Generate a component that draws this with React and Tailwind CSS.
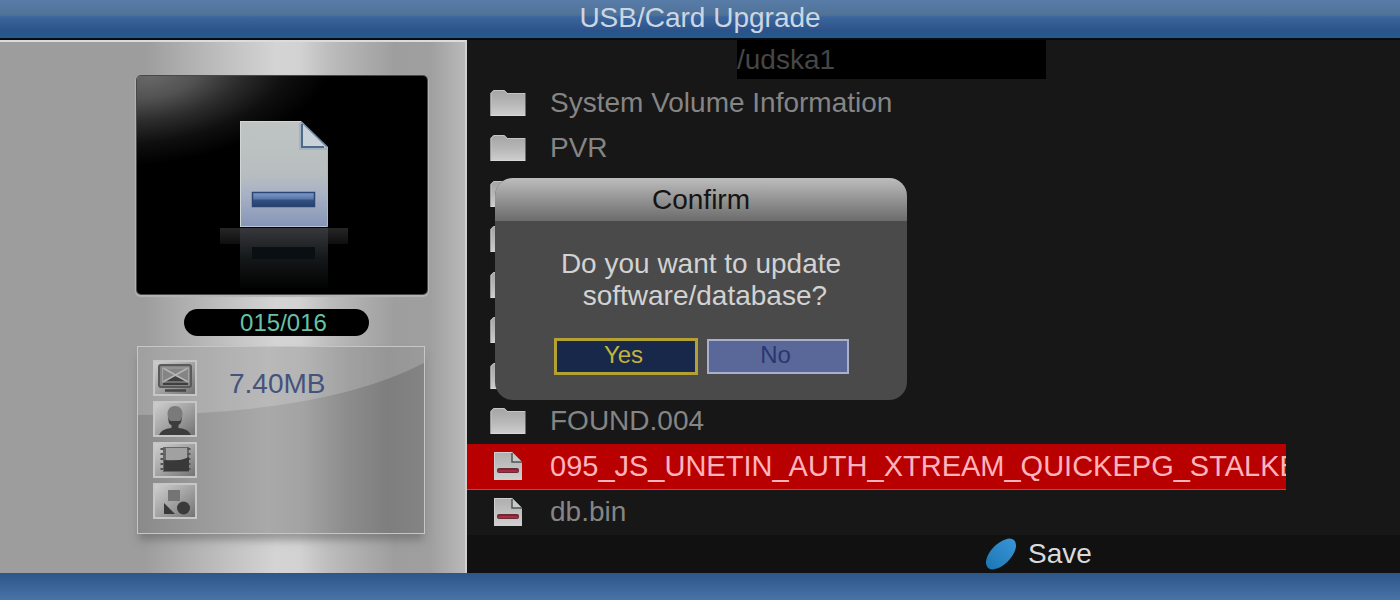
import React from "react";

const entries = [
  { kind: "folder", name: "System Volume Information" },
  { kind: "folder", name: "PVR" },
  { kind: "folder", name: "" },
  { kind: "folder", name: "" },
  { kind: "folder", name: "" },
  { kind: "folder", name: "" },
  { kind: "folder", name: "" },
  { kind: "folder", name: "FOUND.004" },
  { kind: "file", name: "095_JS_UNETIN_AUTH_XTREAM_QUICKEPG_STALKE", selected: true },
  { kind: "file", name: "db.bin" },
];

function FolderIcon() {
  return (
    <svg width="36" height="28" viewBox="0 0 36 28" aria-hidden="true" className="shrink-0">
      <defs>
        <linearGradient id="folder" x1="0" y1="0" x2="0" y2="1">
          <stop offset="0" stopColor="#a4a4a4" />
          <stop offset="0.5" stopColor="#b6b6b6" />
          <stop offset="1" stopColor="#cfcfcf" />
        </linearGradient>
      </defs>
      <path d="M0.500 27V4L3.500 1H14.500L17.500 4H35.500V27Z" fill="url(#folder)" />
      <path d="M1 27V4.500L4 1.500H14L17 4.500H35" fill="none" stroke="#c4c4c4" strokeWidth="1" />
      <path d="M1 26.500H35" stroke="#d8d8d8" />
    </svg>
  );
}

function FileIcon() {
  return (
    <svg width="36" height="28" viewBox="0 0 36 28" aria-hidden="true" className="shrink-0">
      <defs>
        <linearGradient id="file" x1="0" y1="0" x2="0" y2="1">
          <stop offset="0" stopColor="#aeaeae" />
          <stop offset="1" stopColor="#d0d0d0" />
        </linearGradient>
      </defs>
      <path d="M4 0H22L32 10V28H4Z" fill="url(#file)" />
      <path d="M4.500 28V0.500H22" fill="none" stroke="#cfcfcf" />
      <path d="M22 0V10H32Z" fill="#c6cac9" />
      <path d="M22 1V10H32" fill="none" stroke="#4f5555" strokeWidth="1.500" />
      <rect x="7" y="16" width="22" height="5" rx="2" fill="#6b2a38" />
      <rect x="8" y="18" width="20" height="2" rx="1" fill="#a82c40" />
    </svg>
  );
}

function PreviewArt() {
  return (
    <svg viewBox="0 0 290 218" className="block w-full" aria-hidden="true">
      <defs>
        <radialGradient id="shine" gradientUnits="userSpaceOnUse" cx="0" cy="0" r="1" gradientTransform="translate(14 0) rotate(-8) scale(185 88)">
          <stop offset="0" stopColor="#686868" />
          <stop offset="0.25" stopColor="#525252" />
          <stop offset="0.5" stopColor="#2c2c2c" />
          <stop offset="0.75" stopColor="#0f0f0f" />
          <stop offset="1" stopColor="#000" />
        </radialGradient>
        <linearGradient id="page" x1="0" y1="0" x2="0" y2="1">
          <stop offset="0" stopColor="#bfc4c3" />
          <stop offset="0.5" stopColor="#b8bebf" />
          <stop offset="0.68" stopColor="#a9b2c6" />
          <stop offset="1" stopColor="#8595b6" />
        </linearGradient>
        <linearGradient id="bar" x1="0" y1="0" x2="0" y2="1">
          <stop offset="0" stopColor="#7f9ccb" />
          <stop offset="0.45" stopColor="#5877ab" />
          <stop offset="0.55" stopColor="#35517f" />
          <stop offset="1" stopColor="#243f6b" />
        </linearGradient>
        <linearGradient id="mirror" x1="0" y1="0" x2="0" y2="1">
          <stop offset="0" stopColor="#36383c" />
          <stop offset="0.5" stopColor="#151819" />
          <stop offset="1" stopColor="#020202" />
        </linearGradient>
        <linearGradient id="shelf" x1="0" y1="0" x2="0" y2="1">
          <stop offset="0" stopColor="#262626" />
          <stop offset="1" stopColor="#0e0e0e" />
        </linearGradient>
      </defs>
      <rect width="290" height="218" fill="url(#shine)" />
      <rect x="83" y="152" width="128" height="16" fill="url(#shelf)" />
      <rect x="103" y="152" width="88" height="60" fill="url(#mirror)" />
      <rect x="115" y="171" width="63" height="12" fill="#0a0f14" />
      <path d="M103 45H164L191 71V151H103Z" fill="url(#page)" />
      <path d="M103.500 151V45.500H164" fill="none" stroke="#d0d5d6" />
      <path d="M104 150.500H190" stroke="#b9c4da" />
      <path d="M190.500 72V150" stroke="#a5b6da" />
      <path d="M162 47V74H190V72H165V46Z" fill="#8fa3bd" opacity="0.5" />
      <path d="M165 46V71H190Z" fill="#c9d2d8" />
      <path d="M165 48V71H187" fill="none" stroke="#4d6a88" strokeWidth="2" />
      <path d="M164.500 46L190 71" stroke="#7088a4" strokeWidth="1.500" />
      <rect x="115.500" y="116.500" width="62" height="14" fill="url(#bar)" stroke="#2b4674" strokeWidth="1.500" />
    </svg>
  );
}

function Tile({ children, id }) {
  return (
    <svg width="44" height="36" viewBox="0 0 44 36" aria-hidden="true" className="block">
      <defs>
        <linearGradient id={id} x1="0" y1="0" x2="1" y2="1">
          <stop offset="0" stopColor="#d0d0d0" />
          <stop offset="0.5" stopColor="#a3a3a3" />
          <stop offset="1" stopColor="#707070" />
        </linearGradient>
      </defs>
      <rect x="1" y="1" width="42" height="34" fill={"url(#" + id + ")"} stroke="#c6c6c6" strokeWidth="2" />
      {children}
    </svg>
  );
}

function InfoTiles() {
  return (
    <div className="flex flex-col gap-[5px]">
      <Tile id="tile-mail">
        <rect x="6" y="5" width="32" height="22" rx="2" fill="#858585" stroke="#5a5a5a" strokeWidth="2" />
        <path d="M10 22L22 16L35 22V25H10Z" fill="#3f3f3f" />
        <path d="M10 8L35 22M35 8L10 22" stroke="#b5b5b5" strokeWidth="1.500" />
        <rect x="9.500" y="8" width="26" height="14" fill="none" stroke="#a2a2a2" />
        <path d="M12 30.500H33" stroke="#454545" strokeWidth="2.500" />
      </Tile>
      <Tile id="tile-user">
        <path d="M15 14Q15 24 18.500 24V27Q8 28 6 34H38Q36 28 25.500 27V24Q29 23 29 14Z" fill="#3c3c3c" />
        <path d="M14.500 13Q15 5 22 5Q29 5 29.500 13Q29 20 26 20H18Q15 20 14.500 13Z" fill="#7a7a7a" />
      </Tile>
      <Tile id="tile-film">
        <rect x="10" y="5" width="26" height="25" fill="#666" />
        <path d="M9 6V31M36 6V31" stroke="#555" strokeWidth="3" strokeDasharray="2 3" />
        <rect x="13" y="6" width="21" height="12" fill="#a1a1a1" />
        <path d="M11 18Q26 20 36 15V29H11Z" fill="#393939" />
      </Tile>
      <Tile id="tile-shapes">
        <rect x="15" y="7" width="12" height="11" fill="#747474" />
        <path d="M11 20L22 31H11Z" fill="#393939" />
        <circle cx="30.500" cy="25" r="6.500" fill="#3a3a3a" />
      </Tile>
    </div>
  );
}

function Sidebar() {
  return (
    <aside className="w-[467px] shrink-0 border-t-2 border-r-2 border-t-[#dcdcdc] border-r-[#cfcfcf] bg-[linear-gradient(90deg,#9d9d9d_0px,#9d9d9d_145px,#b3b3b3_195px,#c8c8c8_245px,#d4d4d4_276px,#d2d2d2_300px,#bcbcbc_330px,#aaaaaa_368px,#9e9e9e_395px,#9f9f9f_430px,#b9b9b9_465px)] pt-[34px] pl-[137px]">
      <div className="w-[290px]">
        <div className="overflow-hidden rounded-sm shadow-[0_0_0_1px_#484848,0_1px_1px_2px_#b4b4b4]">
          <PreviewArt />
        </div>
        <div className="mt-[15px] ml-[47px] flex h-[27px] w-[185px] items-center justify-center rounded-full bg-black pl-[14px] text-2xl leading-none text-[#68c0a6]">
          015/016
        </div>
        <section className="relative mt-[10px] h-[188px] w-[288px] border border-[#c6c6c6] bg-[linear-gradient(90deg,#8a8a8a_0px,#999999_60px,#a9a9a9_130px,#a3a3a3_165px,#8c8c8c_210px,#7e7e7e_250px,#848484_288px)] shadow-[0_8px_8px_-2px_rgba(90,90,90,0.5)]">
          <svg viewBox="0 0 286 186" preserveAspectRatio="none" className="absolute inset-0 h-full w-full" aria-hidden="true">
            <path d="M0 0H286V16Q190 66 0 68Z" fill="#fff" opacity="0.19" />
          </svg>
          <div className="relative flex gap-8 pt-[13px] pl-[15px]">
            <InfoTiles />
            <span className="pt-2 text-[28px] leading-8 text-[#44537c]">7.40MB</span>
          </div>
        </section>
      </div>
    </aside>
  );
}

function Entry({ entry }) {
  const tone = entry.selected
    ? "border-b bg-[#b90000] text-[29px] text-[#ffb3bd] border-[#8d5a5e]"
    : "text-[28px] text-[#858585]";
  return (
    <li className="flex min-h-0 flex-1">
      <button
        type="button"
        aria-label={entry.name ? undefined : "Folder"}
        className={"flex w-full items-center gap-6 overflow-hidden pl-[23px] text-left leading-8 whitespace-nowrap " + tone}
      >
        {entry.kind === "folder" ? <FolderIcon /> : <FileIcon />}
        {entry.name && <span>{entry.name}</span>}
      </button>
    </li>
  );
}

function ConfirmDialog() {
  return (
    <div className="absolute inset-0 flex items-center justify-center pb-[22px] pl-[2px]">
      <div role="dialog" aria-labelledby="confirm-title" className="w-[412px] overflow-hidden rounded-[18px] bg-[#4a4a4a]">
        <h2 id="confirm-title" className="bg-linear-to-b from-[#bdbdbd] to-[#6c6c6c] pt-[6px] pb-[5px] text-center text-[28px] leading-8 text-[#141414]">
          Confirm
        </h2>
        <p className="pt-[27px] text-center text-[28px] leading-8 whitespace-pre text-[#d2d2d2]">
          {"Do you want to update\n software/database?"}
        </p>
        <div className="flex items-center justify-center gap-[9px] pt-[26px] pb-[25px] text-2xl leading-7">
          <button type="button" className="h-[37px] w-[144px] border-3 border-[#b3a233] bg-[#17284a] pr-1 pb-1 text-[#c4b33a]">
            Yes
          </button>
          <button type="button" className="h-[35px] w-[142px] border-2 border-[#a9b0cc] bg-[#5a6899] pr-1 pb-1 text-[#29366f]">
            No
          </button>
        </div>
      </div>
    </div>
  );
}

export default function App() {
  return (
    <div className="relative flex min-h-screen flex-col bg-[#171717] font-['Liberation_Sans',Arial,sans-serif]">
      <header className="border-b-2 border-[#050a14] bg-[linear-gradient(180deg,#587ca8_0px,#4f7397_15px,#3b659c_17px,#2b5389_31px,#245a8c_38px)] pt-[2px] pb-1 text-center">
        <h1 className="text-[28px] leading-8 text-[#ccd6e2]">USB/Card Upgrade</h1>
      </header>
      <div className="flex flex-1">
        <Sidebar />
        <main className="flex min-w-0 flex-1 flex-col">
          <div className="mb-px ml-[270px] h-[39px] w-[309px] bg-black pt-1 text-[28px] leading-8 text-[#464646]">/udska1</div>
          <ul className="flex w-[819px] max-w-full flex-1 flex-col">
            {entries.map((entry, i) => (
              <Entry key={i} entry={entry} />
            ))}
          </ul>
          <div className="flex h-[38px] items-center bg-[#111111] pl-[518px]">
            <button type="button" className="flex items-center gap-[11px] text-[28px] leading-8 text-[#dadada]">
              <svg width="32" height="32" viewBox="0 0 32 32" aria-hidden="true">
                <defs>
                  <linearGradient id="leaf" x1="0" y1="0" x2="1" y2="0">
                    <stop offset="0" stopColor="#1c78b4" />
                    <stop offset="1" stopColor="#3793d6" />
                  </linearGradient>
                </defs>
                <ellipse cx="16" cy="16" rx="19" ry="10" transform="rotate(-46 16 16)" fill="url(#leaf)" />
              </svg>
              Save
            </button>
          </div>
        </main>
      </div>
      <footer className="h-[27px] bg-linear-to-b from-[#2b568a] to-[#4a74a6]" />
      <ConfirmDialog />
    </div>
  );
}
